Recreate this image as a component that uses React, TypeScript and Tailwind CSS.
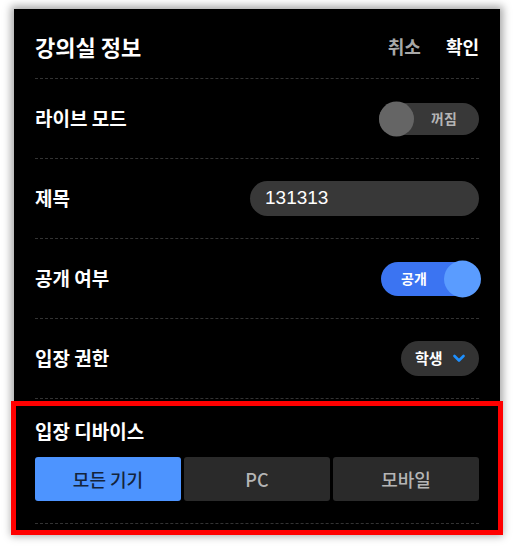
import React from "react";

const font = { fontFamily: '"Noto Sans CJK KR", "Noto Sans", sans-serif' };

function Row({ label, children }: { label: string; children: React.ReactNode }) {
  return (
    <div className="flex h-[80px] items-center justify-between border-b border-dashed border-[#333]">
      <span className="text-[19px] font-bold text-white">{label}</span>
      {children}
    </div>
  );
}

export default function App() {
  return (
    <div className="relative min-h-[546px] bg-white pl-[14px] pt-[9px]" style={font}>
      <div className="w-[486px] h-[524px] bg-black px-[21px] shadow-[0_0_8px_3px_rgba(0,0,0,0.35)]">
        <div className="flex h-[70px] items-center justify-between border-b border-dashed border-[#333] pt-[6px]">
          <span className="text-[22px] font-bold text-white">강의실 정보</span>
          <div className="flex items-center gap-[25px] text-[18px] font-bold">
            <span className="text-[#a8a8a8]">취소</span>
            <span className="text-white">확인</span>
          </div>
        </div>

        <Row label="라이브 모드">
          <div className="relative flex h-[32px] w-[100px] items-center rounded-full bg-[#383838]">
            <div className="absolute left-0 top-1/2 h-[35px] w-[35px] -translate-y-1/2 rounded-full bg-[#656565]" />
            <span className="ml-[52px] text-[14px] font-bold text-[#b5b5b5]">꺼짐</span>
          </div>
        </Row>

        <Row label="제목">
          <div className="flex h-[35px] w-[229px] items-center rounded-full bg-[#383838] px-[15px]">
            <span className="text-[19px] text-white" style={{ fontFamily: '"Liberation Sans", Arial, sans-serif' }}>
              131313
            </span>
          </div>
        </Row>

        <Row label="공개 여부">
          <div className="relative flex h-[34px] w-[98px] items-center rounded-full bg-[#3b74f2]">
            <span className="ml-[20px] text-[14px] font-bold text-white">공개</span>
            <div className="absolute right-[-2px] top-1/2 h-[37px] w-[37px] -translate-y-1/2 rounded-full bg-[#5a9cff]" />
          </div>
        </Row>

        <Row label="입장 권한">
          <div className="flex h-[35px] w-[78px] items-center rounded-full bg-[#333] pl-[14px]">
            <span className="text-[15px] font-bold text-white">학생</span>
            <svg className="ml-[10px]" width="12" height="9" viewBox="0 0 12 9" fill="none">
              <path d="M1.5 2 L6 6.5 L10.5 2" stroke="#1e90ff" strokeWidth="2.6" strokeLinecap="round" strokeLinejoin="round" />
            </svg>
          </div>
        </Row>

        <div className="border-b border-dashed border-[#333] pt-[19px] pb-[22px]">
          <div className="text-[19px] font-bold leading-[26px] text-white">입장 디바이스</div>
          <div className="mt-[13px] grid grid-cols-3 gap-[3px]">
            <div className="flex h-[44px] items-center justify-center rounded-[3px] bg-[#4d94ff] text-[18px] font-medium text-[#14243c]">
              모든 기기
            </div>
            <div className="flex h-[44px] items-center justify-center rounded-[3px] bg-[#2a2a2a] text-[18px] font-medium text-[#b5b5b5]">
              PC
            </div>
            <div className="flex h-[44px] items-center justify-center rounded-[3px] bg-[#2a2a2a] text-[18px] font-medium text-[#b5b5b5]">
              모바일
            </div>
          </div>
        </div>
      </div>

      <div className="pointer-events-none absolute left-[11px] top-[401px] h-[134px] w-[492px] border-[5px] border-[#ff0000]" />
    </div>
  );
}
